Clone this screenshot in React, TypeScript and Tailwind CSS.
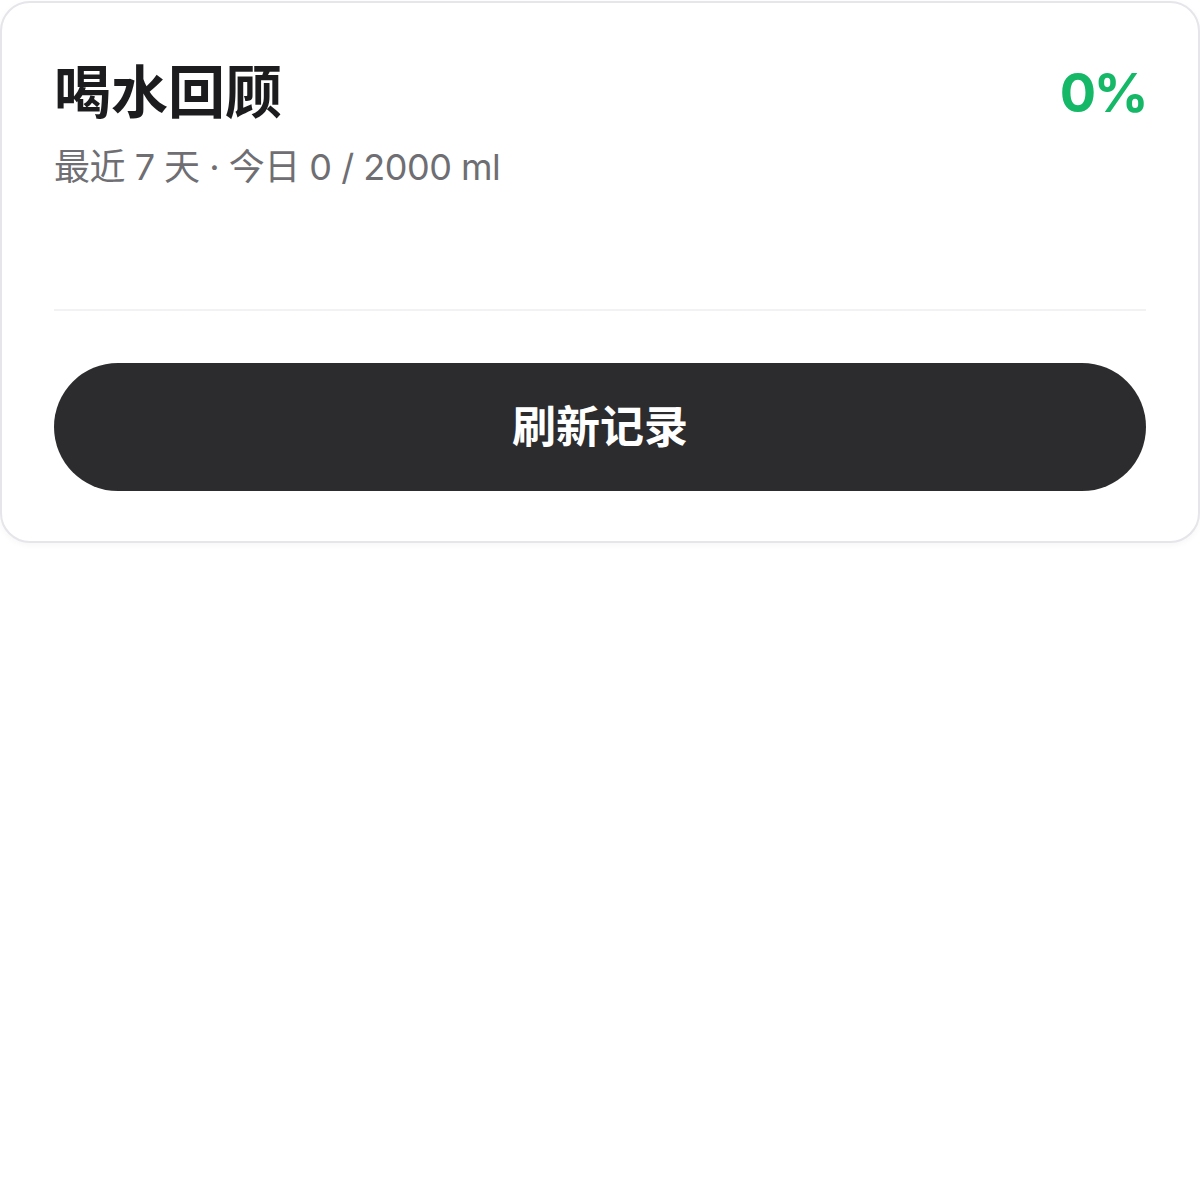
import React from "react";

export default function App() {
  const font = { fontFamily: 'Inter, "Noto Sans CJK SC", sans-serif' };
  return (
    <div className="w-[1200px] h-[1200px] bg-white" style={font}>
      <div className="mt-px w-[1200px] rounded-[30px] border-2 border-[#e5e5ea] bg-white px-[52px] pt-[52px] pb-[50px] shadow-[0_2px_6px_rgba(0,0,0,0.04)]">
        <div className="flex items-start justify-between">
          <div className="flex flex-col">
            <div className="text-[57px] font-bold leading-[76px] text-[#1c1c1e]">喝水回顾</div>
            <div className="mt-[14px] text-[36px] leading-[44px] tracking-[-0.5px] text-[#6e6e73]">最近 7 天 · 今日 0 / 2000 ml</div>
          </div>
          <div className="text-[54px] font-bold leading-[76px] tracking-[-2.5px] text-[#14b866]">0%</div>
        </div>
        <div className="mt-[120px] h-[2px] bg-[#f2f2f5]" />
        <button className="mt-[52px] flex h-[128px] w-full items-center justify-center rounded-full bg-[#2c2c2e] text-[44px] font-semibold text-white">
          刷新记录
        </button>
      </div>
    </div>
  );
}
